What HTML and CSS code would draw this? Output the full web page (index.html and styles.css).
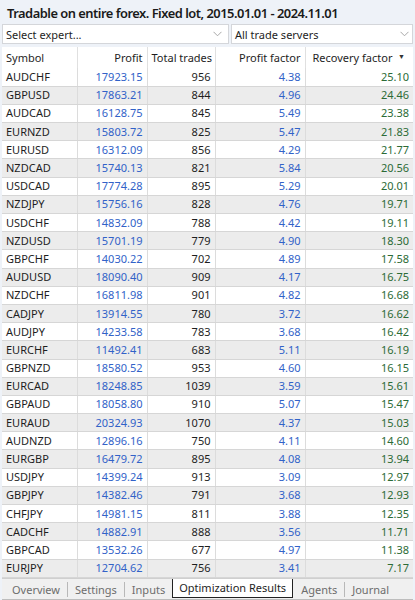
FILE: index.html
```html
<!DOCTYPE html>
<html>
<head>
<meta charset="utf-8">
<link rel="stylesheet" href="styles.css">
</head>
<body>
<div class="app">
  <h1 class="title">Tradable on entire forex. Fixed lot, 2015.01.01 - 2024.11.01</h1>
  <div class="filters">
    <div class="select sel-expert"><span>Select expert...</span><svg class="chev" width="9" height="6" viewBox="0 0 9 6"><path d="M0.5 0.8 L4.5 4.8 L8.5 0.8" fill="none" stroke="#a8a8a8" stroke-width="1"/></svg></div>
    <div class="select sel-server"><span>All trade servers</span><svg class="chev" width="9" height="6" viewBox="0 0 9 6"><path d="M0.5 0.8 L4.5 4.8 L8.5 0.8" fill="none" stroke="#a8a8a8" stroke-width="1"/></svg></div>
  </div>
  <div class="grid">
    <table>
      <colgroup>
        <col class="c1"><col class="c2"><col class="c3"><col class="c4"><col class="c5">
      </colgroup>
      <thead>
        <tr>
          <th class="l">Symbol</th>
          <th class="r">Profit</th>
          <th class="r">Total trades</th>
          <th class="r">Profit factor</th>
          <th class="l sorted">Recovery factor<span class="arrow">&#9660;</span></th>
        </tr>
      </thead>
      <tbody>
        <tr><td>AUDCHF</td><td class="b">17923.15</td><td class="n">956</td><td class="b">4.38</td><td class="g">25.10</td></tr>
        <tr><td>GBPUSD</td><td class="b">17863.21</td><td class="n">844</td><td class="b">4.96</td><td class="g">24.46</td></tr>
        <tr><td>AUDCAD</td><td class="b">16128.75</td><td class="n">845</td><td class="b">5.49</td><td class="g">23.38</td></tr>
        <tr><td>EURNZD</td><td class="b">15803.72</td><td class="n">825</td><td class="b">5.47</td><td class="g">21.83</td></tr>
        <tr><td>EURUSD</td><td class="b">16312.09</td><td class="n">856</td><td class="b">4.29</td><td class="g">21.77</td></tr>
        <tr><td>NZDCAD</td><td class="b">15740.13</td><td class="n">821</td><td class="b">5.84</td><td class="g">20.56</td></tr>
        <tr><td>USDCAD</td><td class="b">17774.28</td><td class="n">895</td><td class="b">5.29</td><td class="g">20.01</td></tr>
        <tr><td>NZDJPY</td><td class="b">15756.16</td><td class="n">828</td><td class="b">4.76</td><td class="g">19.71</td></tr>
        <tr><td>USDCHF</td><td class="b">14832.09</td><td class="n">788</td><td class="b">4.42</td><td class="g">19.11</td></tr>
        <tr><td>NZDUSD</td><td class="b">15701.19</td><td class="n">779</td><td class="b">4.90</td><td class="g">18.30</td></tr>
        <tr><td>GBPCHF</td><td class="b">14030.22</td><td class="n">702</td><td class="b">4.89</td><td class="g">17.58</td></tr>
        <tr><td>AUDUSD</td><td class="b">18090.40</td><td class="n">909</td><td class="b">4.17</td><td class="g">16.75</td></tr>
        <tr><td>NZDCHF</td><td class="b">16811.98</td><td class="n">901</td><td class="b">4.82</td><td class="g">16.68</td></tr>
        <tr><td>CADJPY</td><td class="b">13914.55</td><td class="n">780</td><td class="b">3.72</td><td class="g">16.62</td></tr>
        <tr><td>AUDJPY</td><td class="b">14233.58</td><td class="n">783</td><td class="b">3.68</td><td class="g">16.42</td></tr>
        <tr><td>EURCHF</td><td class="b">11492.41</td><td class="n">683</td><td class="b">5.11</td><td class="g">16.19</td></tr>
        <tr><td>GBPNZD</td><td class="b">18580.52</td><td class="n">953</td><td class="b">4.60</td><td class="g">16.15</td></tr>
        <tr><td>EURCAD</td><td class="b">18248.85</td><td class="n">1039</td><td class="b">3.59</td><td class="g">15.61</td></tr>
        <tr><td>GBPAUD</td><td class="b">18058.80</td><td class="n">910</td><td class="b">5.07</td><td class="g">15.47</td></tr>
        <tr><td>EURAUD</td><td class="b">20324.93</td><td class="n">1070</td><td class="b">4.37</td><td class="g">15.03</td></tr>
        <tr><td>AUDNZD</td><td class="b">12896.16</td><td class="n">750</td><td class="b">4.11</td><td class="g">14.60</td></tr>
        <tr><td>EURGBP</td><td class="b">16479.72</td><td class="n">895</td><td class="b">4.08</td><td class="g">13.94</td></tr>
        <tr><td>USDJPY</td><td class="b">14399.24</td><td class="n">913</td><td class="b">3.09</td><td class="g">12.97</td></tr>
        <tr><td>GBPJPY</td><td class="b">14382.46</td><td class="n">791</td><td class="b">3.68</td><td class="g">12.93</td></tr>
        <tr><td>CHFJPY</td><td class="b">14981.15</td><td class="n">811</td><td class="b">3.88</td><td class="g">12.35</td></tr>
        <tr><td>CADCHF</td><td class="b">14882.91</td><td class="n">888</td><td class="b">3.56</td><td class="g">11.71</td></tr>
        <tr><td>GBPCAD</td><td class="b">13532.26</td><td class="n">677</td><td class="b">4.97</td><td class="g">11.38</td></tr>
        <tr><td>EURJPY</td><td class="b">12704.62</td><td class="n">756</td><td class="b">3.41</td><td class="g">7.17</td></tr>
      </tbody>
    </table>
  </div>
  <div class="tabs">
    <span class="tab">Overview</span><span class="sep"></span>
    <span class="tab">Settings</span><span class="sep"></span>
    <span class="tab">Inputs</span>
    <span class="tab active">Optimization Results</span>
    <span class="tab">Agents</span><span class="sep"></span>
    <span class="tab">Journal</span>
  </div>
</div>
</body>
</html>
```
FILE: styles.css
```css
* { box-sizing: border-box; }
html, body { margin: 0; padding: 0; }
body {
  background: #eef2f8;
  font-family: "Noto Sans", "Open Sans", sans-serif;
  color: #1e1e1e;
  width: 415px;
  height: 600px;
  overflow: hidden;
}
.app {
  display: flex;
  flex-direction: column;
  height: 600px;
}
.title {
  margin: 0;
  padding: 3px 0 0 7px;
  height: 24px;
  font-size: 12.9px;
  font-weight: 600;
  line-height: 20px;
  letter-spacing: -0.5px;
  color: #1a1a1a;
  white-space: nowrap;
}
.filters {
  display: flex;
  gap: 2px;
  padding: 0 2px;
  height: 21px;
}
.select {
  display: flex;
  align-items: center;
  justify-content: space-between;
  background: #fff;
  border: 1px solid #d4d6da;
  font-size: 11px;
  padding: 0 6px 0 3px;
  height: 20px;
  color: #1e1e1e;
}
.sel-expert { width: 227px; }
.sel-server { flex: 1; padding-right: 3px; }
.grid {
  background: #fff;
  margin: 2px 2px 0 2px;
  height: 531px;
  overflow: hidden;
}
table {
  border-collapse: collapse;
  table-layout: fixed;
  width: 411px;
  font-size: 11px;
}
col.c1 { width: 75px; }
col.c2 { width: 70px; }
col.c3 { width: 68px; }
col.c4 { width: 90px; }
col.c5 { width: 108px; }
th {
  font-weight: 400;
  height: 21px;
  padding: 0 4px;
  border-right: 1px solid #e0e0e0;
  color: #1e1e1e;
  white-space: nowrap;
}
th:last-child { border-right: none; }
th.l { text-align: left; }
th.r { text-align: right; }
th.sorted { position: relative; padding-left: 7px; }
.arrow {
  position: absolute;
  right: 8px;
  top: 5px;
  font-size: 7px;
  color: #333;
}
td {
  height: 18.2px;
  padding: 0 4px;
  text-align: right;
  border-right: 1px solid #dcdcdc;
  border-bottom: 1px solid #d6d6d6;
  line-height: 16px;
  white-space: nowrap;
}
td:first-child { text-align: left; color: #1e1e1e; }
td:last-child { border-right: none; }
tbody tr:nth-child(even) td { background: #ececec; }
td.b { color: #3162c8; }
td.n { color: #1e1e1e; }
td.g { color: #2c6b36; }
.tabs {
  display: flex;
  align-items: center;
  background: #f0f0f0;
  height: 22px;
  margin: 0 2px;
  border-top: 1px solid #cfcfcf;
  border-bottom: 1px solid #bdbdbd;
  font-size: 11px;
  color: #6d6d6d;
  padding-left: 3px;
}
.tab {
  padding: 0 7px;
  line-height: 17px;
  white-space: nowrap;
}
.sep {
  width: 1px;
  height: 15px;
  background: #b8b8b8;
}
.tab.active {
  background: #fff;
  color: #1e1e1e;
  border: 1px solid #222;
  border-top: none;
  height: 19px;
  line-height: 17px;
  align-self: flex-start;
  margin: 0 1px 0 0;
  padding: 0 6px;
}
```
